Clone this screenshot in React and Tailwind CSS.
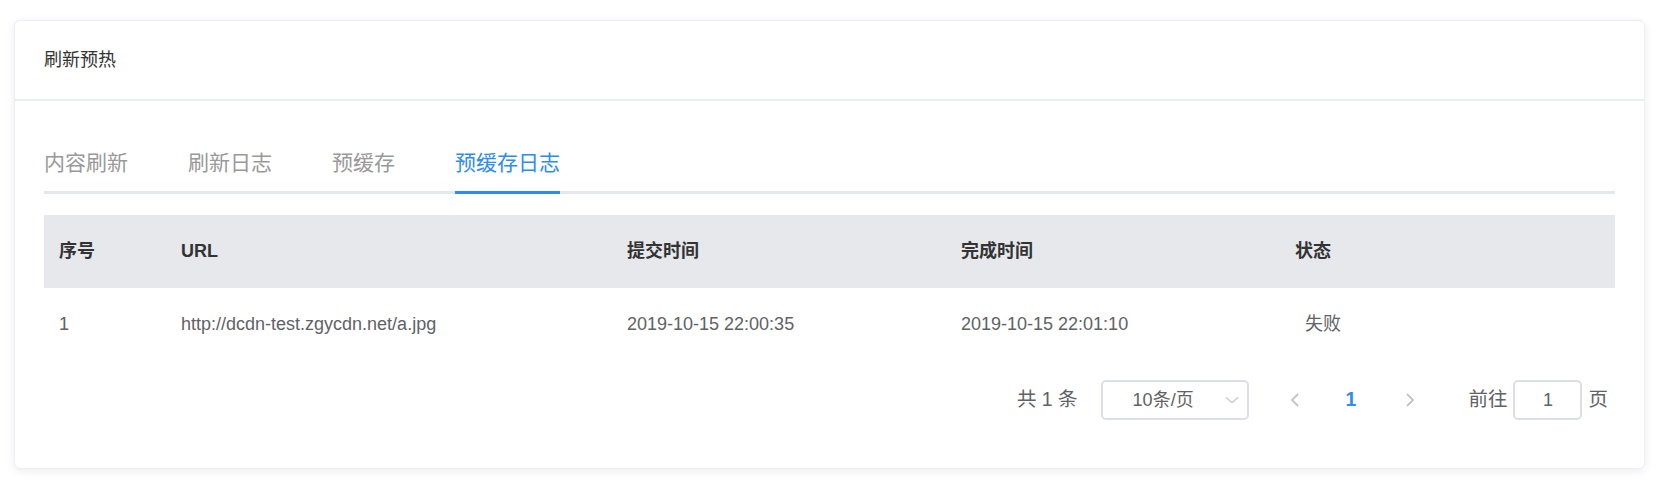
const tabs = ["内容刷新", "刷新日志", "预缓存", "预缓存日志"];

const rows = [
  {
    id: 1,
    url: "http://dcdn-test.zgycdn.net/a.jpg",
    submitted: "2019-10-15 22:00:35",
    finished: "2019-10-15 22:01:10",
    status: "失败",
  },
];

const cols = "grid grid-cols-[122px_446px_334px_334px_1fr]";

export default function App() {
  const active = 3;

  return (
    <div
      className="min-h-screen bg-white pt-[20px] pl-[14px] pr-[18px]"
      style={{ fontFamily: '"Liberation Sans", Arial, "Noto Sans CJK SC", sans-serif' }}
    >
      {/* ===== Card ===== */}
      <div className="rounded-[6px] border border-[#ebeef5] bg-white shadow-[0_2px_10px_rgba(0,0,0,0.08)]">
        <div className="flex h-[80px] items-center border-b-2 border-[#e8ecf3] px-[29px] text-[18px] text-[#333]">
          刷新预热
        </div>

        <div className="px-[29px] pt-[48px] pb-[48px]">
          {/* Tabs */}
          <div className="flex gap-[60px] border-b-[3px] border-[#e4e7ed]">
            {tabs.map((t, i) => (
              <div
                key={t}
                className={
                  i === active
                    ? "-mb-[3px] border-b-[3px] border-[#2d8cf0] pb-[14px] text-[21px] leading-[28px] text-[#2d8cf0]"
                    : "pb-[14px] text-[21px] leading-[28px] text-[#999]"
                }
              >
                {t}
              </div>
            ))}
          </div>

          {/* Table */}
          <div className="mt-[21px]">
            <div className={`${cols} h-[73px] items-center bg-[#e6e8ec] text-[18px] font-bold text-[#333]`}>
              <div className="pl-[15px]">序号</div>
              <div className="pl-[15px]">URL</div>
              <div className="pl-[15px]">提交时间</div>
              <div className="pl-[15px]">完成时间</div>
              <div className="pl-[15px]">状态</div>
            </div>
            {rows.map((r) => (
              <div key={r.id} className={`${cols} h-[72px] items-center text-[18px] text-[#606266]`}>
                <div className="pl-[15px]">{r.id}</div>
                <div className="pl-[15px]">{r.url}</div>
                <div className="pl-[15px]">{r.submitted}</div>
                <div className="pl-[15px]">{r.finished}</div>
                <div className="pl-[25px]">{r.status}</div>
              </div>
            ))}
          </div>

          {/* Pagination */}
          <div className="mt-[20px] flex h-[40px] items-center justify-end pr-[7px] text-[19.5px] text-[#606266]">
            <span>共 1 条</span>
            <div className="ml-[23px] flex h-[40px] w-[148px] items-center rounded-[5px] border-2 border-[#dcdfe6] pl-[30px] pr-[8px] text-[18px]">
              <span>10条/页</span>
              <svg className="ml-auto" width="14" height="8" viewBox="0 0 14 8" fill="none" stroke="#c0c4cc" strokeWidth="1.2">
                <path d="M1 1.2 L7 6.8 L13 1.2" />
              </svg>
            </div>
            <svg className="ml-[41px]" width="10" height="14" viewBox="0 0 10 14" fill="none" stroke="#c0c4cc" strokeWidth="1.8">
              <path d="M8 1 L2 7 L8 13" />
            </svg>
            <span className="ml-[46px] font-bold text-[#2d8cf0]">1</span>
            <svg className="ml-[49px]" width="10" height="14" viewBox="0 0 10 14" fill="none" stroke="#c0c4cc" strokeWidth="1.8">
              <path d="M2 1 L8 7 L2 13" />
            </svg>
            <span className="ml-[53px]">前往</span>
            <div className="ml-[6px] flex h-[40px] w-[69px] items-center justify-center rounded-[5px] border-2 border-[#dcdfe6] text-[18px]">
              1
            </div>
            <span className="ml-[6px]">页</span>
          </div>
        </div>
      </div>
    </div>
  );
}
